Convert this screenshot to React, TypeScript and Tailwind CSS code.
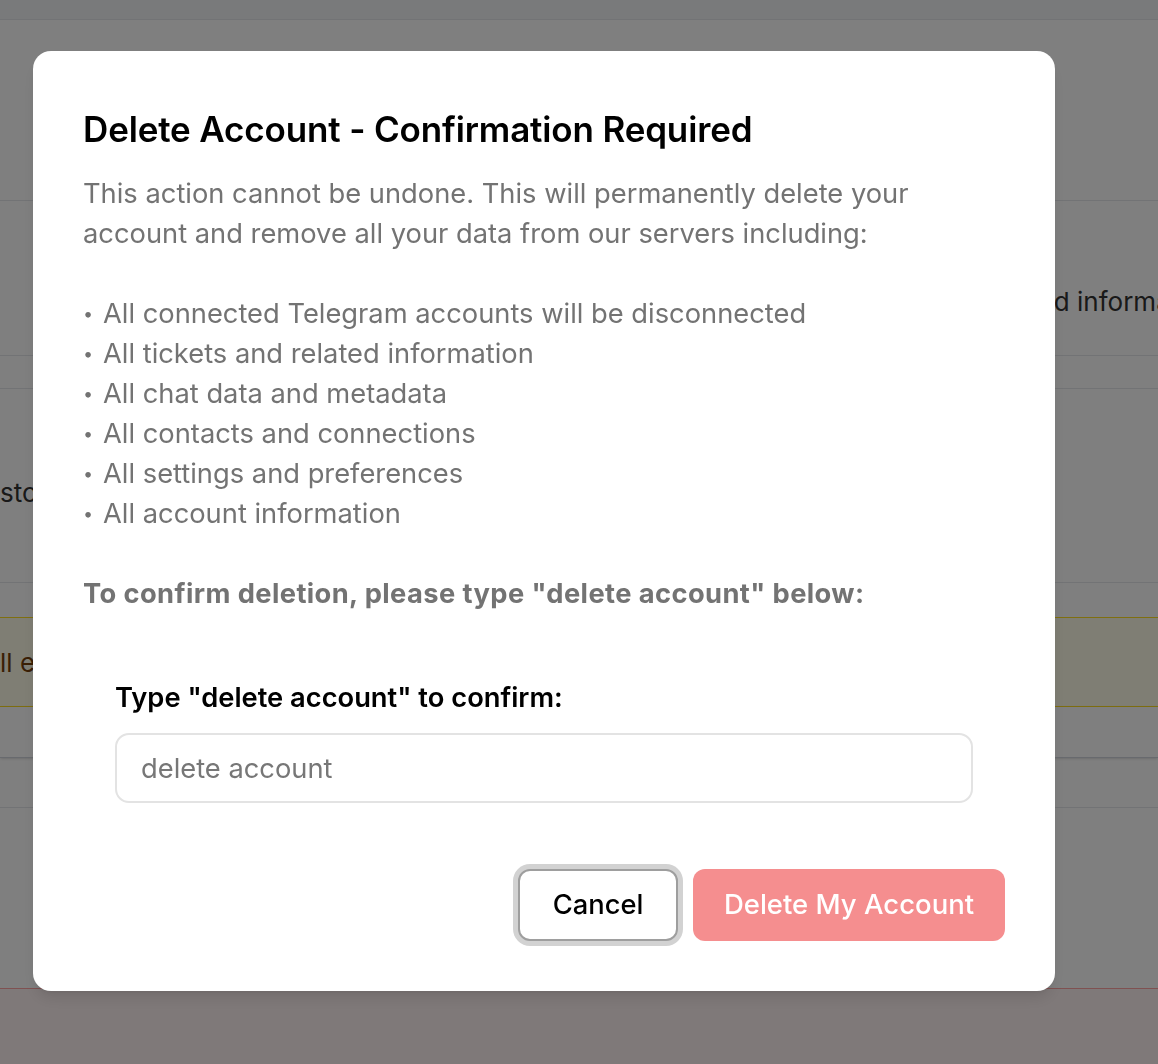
import { useState } from 'react'

const items = [
  'All connected Telegram accounts will be disconnected',
  'All tickets and related information',
  'All chat data and metadata',
  'All contacts and connections',
  'All settings and preferences',
  'All account information',
]

function BackgroundPage() {
  return (
    <div className="min-h-screen bg-white text-[#333] text-[26px] overflow-hidden">
      <div className="h-[20px] bg-gray-100 border-b border-gray-200" />
      <div className="h-[181px] border-b border-gray-200" />
      <div className="h-[155px] border-b border-gray-200 flex items-center whitespace-nowrap pt-[46px] pl-[985px]">
        related information
      </div>
      <div className="h-[33px] border-b border-gray-200" />
      <div className="h-[194px] border-b border-gray-200 flex items-center pt-[14px] whitespace-nowrap">
        stored data
      </div>
      <div className="h-[34px]" />
      <div className="h-[90px] bg-yellow-50 border-y border-yellow-300 flex items-center whitespace-nowrap text-yellow-900">
        ll export your data first
      </div>
      <div className="h-[51px] border-b border-gray-300 shadow-sm" />
      <div className="h-[50px] border-b border-gray-200" />
      <div className="h-[180px]" />
      <div className="h-[120px] bg-red-50 border-t border-red-300" />
    </div>
  )
}

export default function App() {
  const [value, setValue] = useState('')

  return (
    <div className="relative min-h-screen font-['Inter',sans-serif]">
      <BackgroundPage />

      {/* Overlay */}
      <div className="fixed inset-0 bg-black/50 pl-[33px] pt-[51px]">
        <div className="w-[1022px] rounded-[18px] bg-white p-[50px] shadow-lg">
          <h2 className="text-[35px] leading-[56px] font-semibold text-black tracking-[-0.15px]">
            Delete Account - Confirmation Required
          </h2>
          <div className="mt-[17px] max-w-[880px] text-[27.3px] leading-[40px] text-[#737373]">
            <p>
              This action cannot be undone. This will permanently delete your account and remove all your data from our
              servers including:
            </p>
            <ul className="mt-[40px]">
              {items.map((item) => (
                <li key={item}>
                  <span className="inline-block w-[20px] text-[18px] align-top">•</span>
                  {item}
                </li>
              ))}
            </ul>
            <p className="mt-[40px] font-bold tracking-[0.4px]">
              To confirm deletion, please type "delete account" below:
            </p>
          </div>

          <div className="mt-[32px] p-[32px]">
            <label className="block text-[27.3px] leading-[40px] font-semibold text-black">
              Type "delete account" to confirm:
            </label>
            <input
              value={value}
              onChange={(e) => setValue(e.target.value)}
              placeholder="delete account"
              className="mt-[15px] h-[70px] w-full rounded-[14px] border-2 border-[#e3e3e3] px-[24px] text-[27.3px] text-black placeholder:text-[#777] outline-none"
            />
          </div>

          <div className="mt-[34px] flex justify-end gap-[15px]">
            <button className="h-[72px] w-[160px] rounded-[12px] border-2 border-[#9e9e9e] bg-white text-[27.3px] font-medium text-black ring-[5px] ring-[#d2d2d2]">
              Cancel
            </button>
            <button
              disabled
              className="h-[72px] w-[312px] rounded-[12px] bg-[#f58e8f] text-[27.5px] font-medium text-white"
            >
              Delete My Account
            </button>
          </div>
        </div>
      </div>
    </div>
  )
}
